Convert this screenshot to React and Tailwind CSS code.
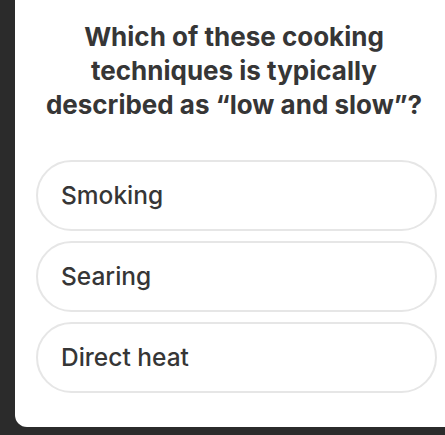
import React from "react";

const options = ["Smoking", "Searing", "Direct heat"];

export default function App() {
  return (
    <div className="h-[435px] w-[445px] overflow-hidden bg-[#2b2b2b] pb-[8px] pl-[15px]">
      <div
        className="flex h-full w-[440px] flex-col rounded-bl-[12px] bg-white pl-[21px] pr-[8px] pt-[20px] text-[#363636]"
        style={{ fontFamily: "Inter, 'Open Sans', sans-serif" }}
      >
        <h1 className="mr-[15px] text-center text-[26px] font-bold leading-[34px]">
          Which of these cooking
          <br />
          techniques is typically
          <br />
          described as “low and slow”?
        </h1>

        <div className="mt-[38px] flex flex-col gap-[10px]">
          {options.map((opt) => (
            <button
              key={opt}
              className="flex h-[71px] w-[401px] items-center rounded-full border-2 border-[#e6e6e6] bg-white pl-[23px] text-left text-[24.5px] font-medium"
            >
              {opt}
            </button>
          ))}
        </div>
      </div>
    </div>
  );
}
